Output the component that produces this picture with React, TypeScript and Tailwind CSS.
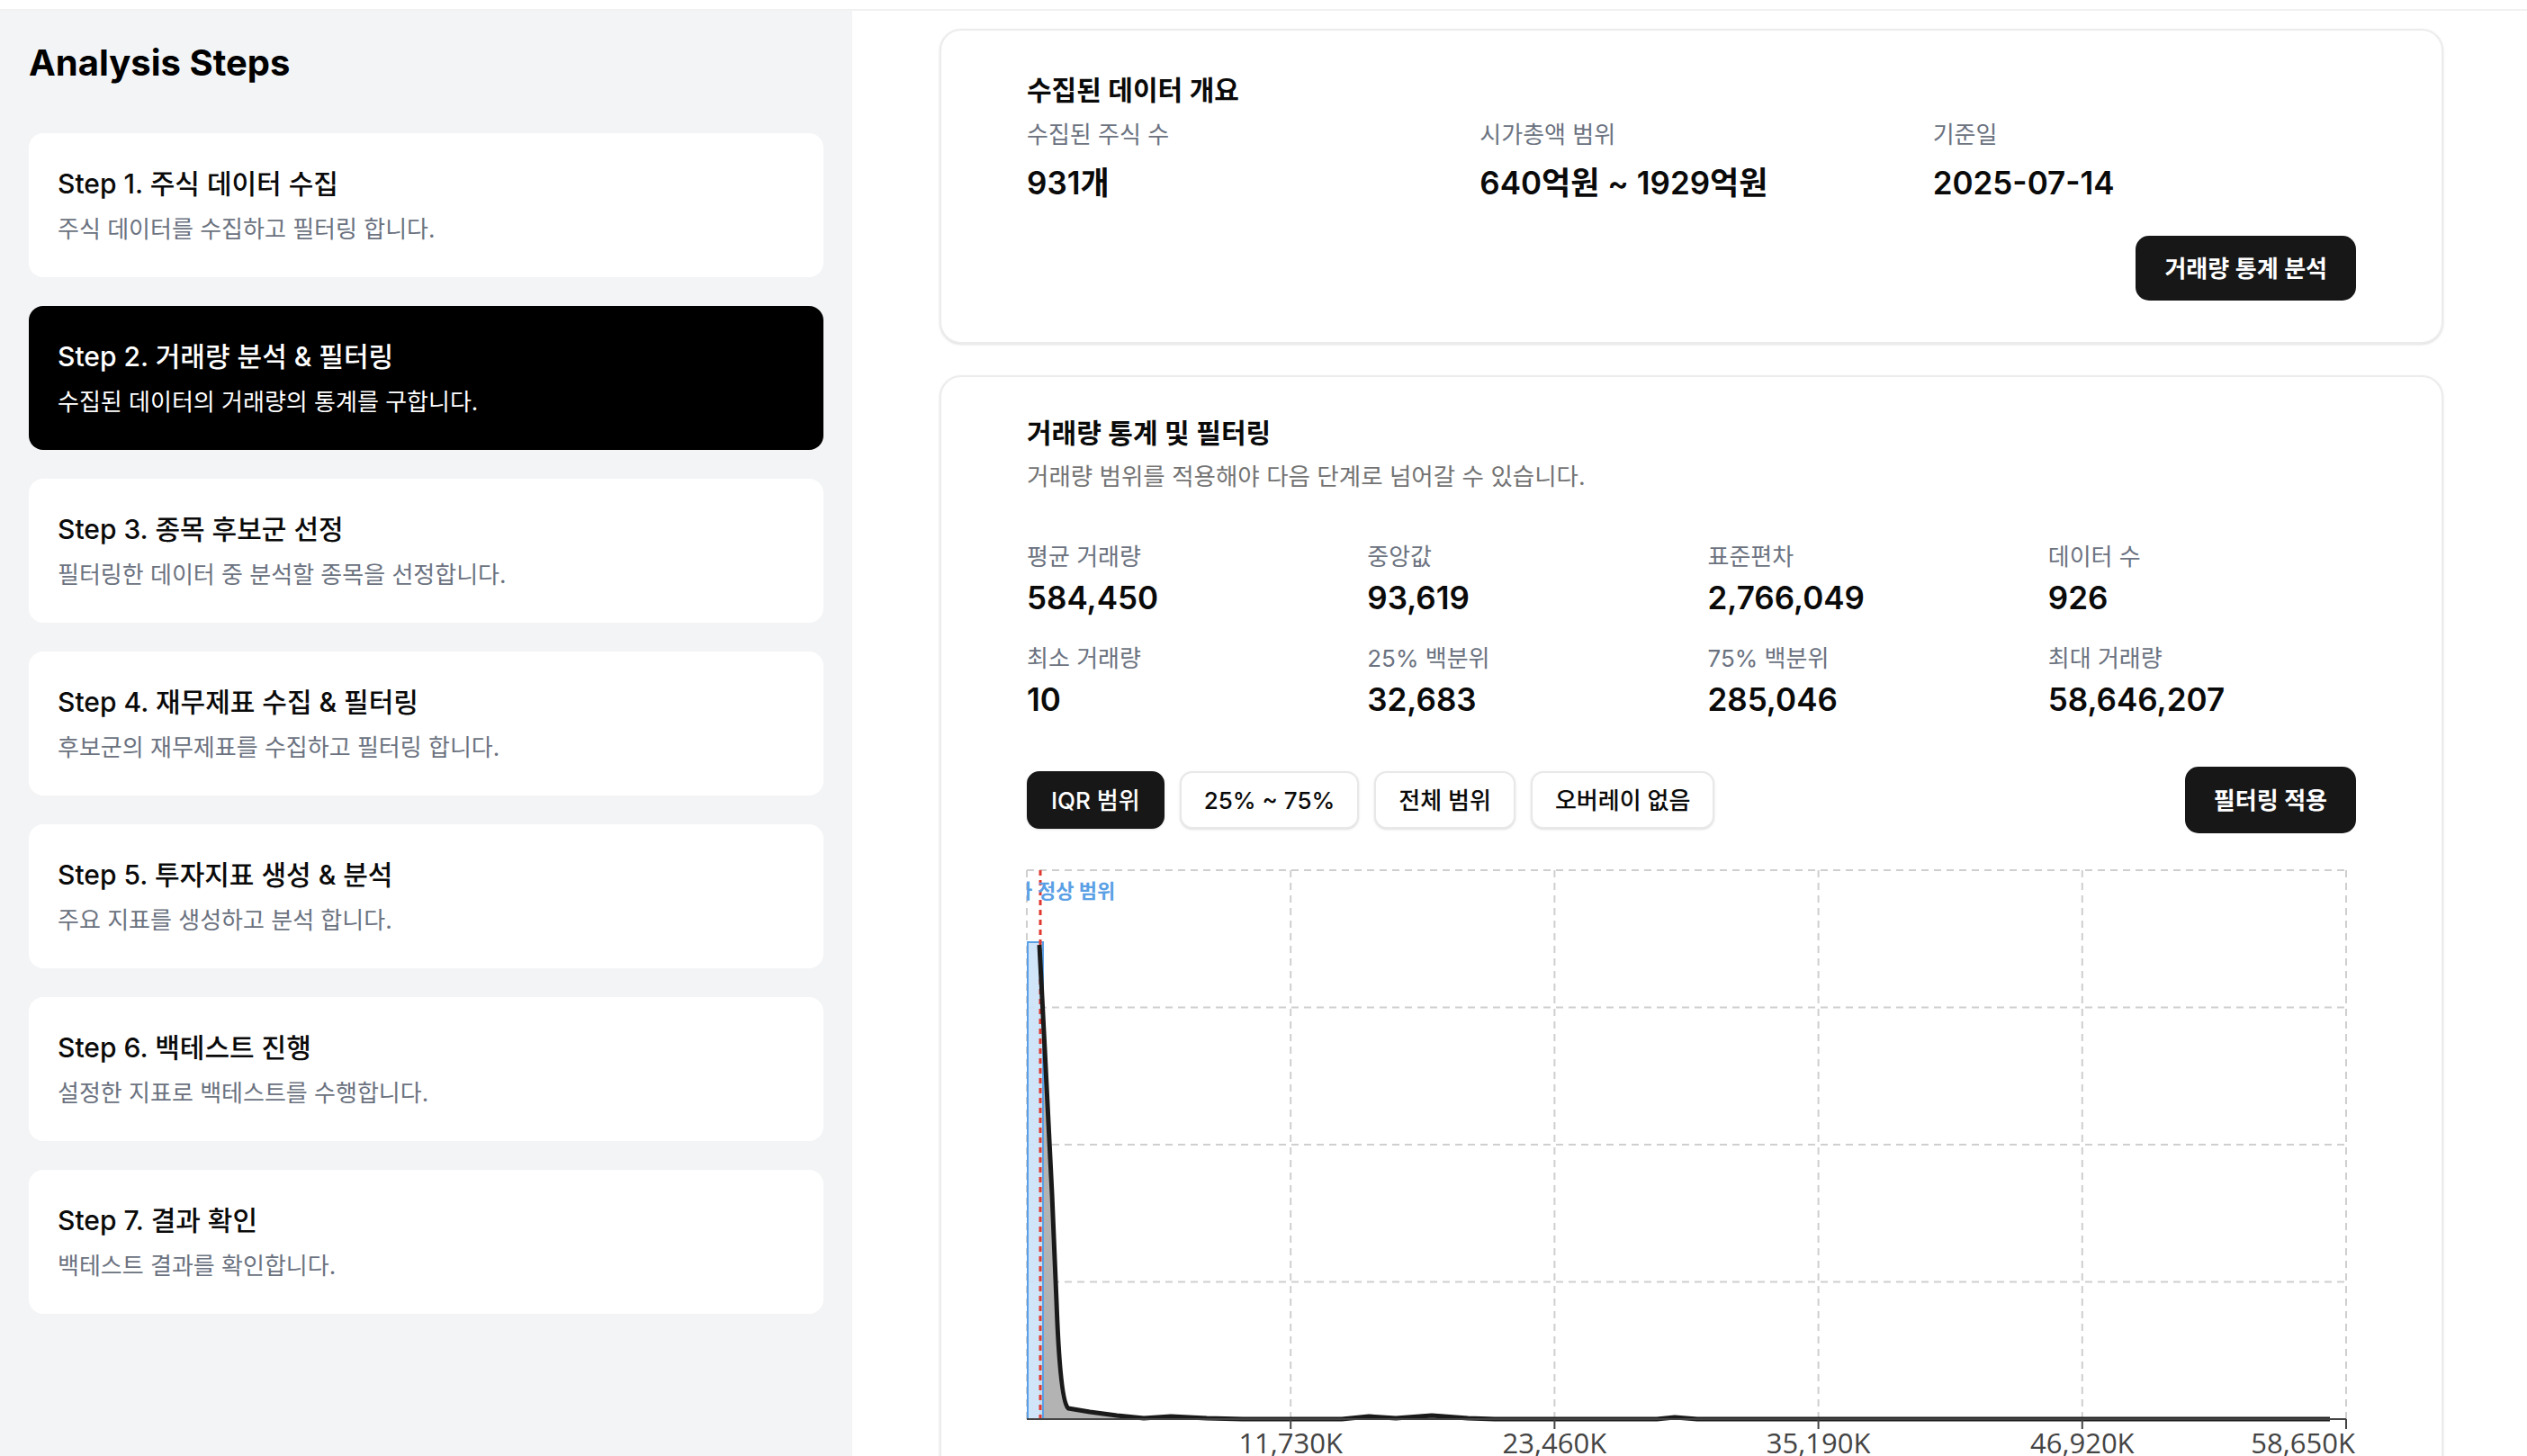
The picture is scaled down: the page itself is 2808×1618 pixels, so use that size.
import type React from 'react';

interface Step {
  title: string;
  desc: string;
}

const steps: Step[] = [
  { title: 'Step 1. 주식 데이터 수집', desc: '주식 데이터를 수집하고 필터링 합니다.' },
  { title: 'Step 2. 거래량 분석 & 필터링', desc: '수집된 데이터의 거래량의 통계를 구합니다.' },
  { title: 'Step 3. 종목 후보군 선정', desc: '필터링한 데이터 중 분석할 종목을 선정합니다.' },
  { title: 'Step 4. 재무제표 수집 & 필터링', desc: '후보군의 재무제표를 수집하고 필터링 합니다.' },
  { title: 'Step 5. 투자지표 생성 & 분석', desc: '주요 지표를 생성하고 분석 합니다.' },
  { title: 'Step 6. 백테스트 진행', desc: '설정한 지표로 백테스트를 수행합니다.' },
  { title: 'Step 7. 결과 확인', desc: '백테스트 결과를 확인합니다.' },
];

const overview = [
  { label: '수집된 주식 수', value: '931개' },
  { label: '시가총액 범위', value: '640억원 ~ 1929억원' },
  { label: '기준일', value: '2025-07-14' },
];

const stats = [
  { label: '평균 거래량', value: '584,450' },
  { label: '중앙값', value: '93,619' },
  { label: '표준편차', value: '2,766,049' },
  { label: '데이터 수', value: '926' },
  { label: '최소 거래량', value: '10' },
  { label: '25% 백분위', value: '32,683' },
  { label: '75% 백분위', value: '285,046' },
  { label: '최대 거래량', value: '58,646,207' },
];

const ranges = ['IQR 범위', '25% ~ 75%', '전체 범위', '오버레이 없음'];

const StepCard: React.FC<{ step: Step; active: boolean }> = ({ step, active }) => (
  <div
    className={`h-[160px] rounded-2xl px-8 flex flex-col justify-center gap-[16px] ${
      active ? 'bg-black text-white' : 'bg-white text-[#0a0a0a]'
    }`}
  >
    <h3 className="text-[30px] leading-[38px] font-medium">{step.title}</h3>
    <p className={`text-[26px] leading-[32px] ${active ? 'text-white' : 'text-[#6b7280]'}`}>{step.desc}</p>
  </div>
);

// plot area 1466 x 610, ticks every 293.2px
const W = 1466;
const H = 610;
const gridX = [0, 1, 2, 3, 4, 5].map((i) => (W / 5) * i);
const gridY = [0, 1, 2, 3].map((i) => (H / 4) * i);
const tickLabels = ['11,730K', '23,460K', '35,190K', '46,920K', '58,650K'];

const curve =
  'M14 83 L20 200 L28 360 L33 480 Q37 590 46 598 L70 602 L100 606 L130 609 L160 607 L200 609 L240 610 L350 610 L380 607 L410 609 L450 606 L490 609 L520 610 L700 610 L720 608 L745 610 L1448 610';

const VolumeChart: React.FC = () => (
  <svg width={1476} height={700} className="mt-[41px] overflow-visible block">
    <defs>
      <clipPath id="plot-clip">
        <rect x={0} y={0} width={1476} height={700} />
      </clipPath>
    </defs>
    {gridY.map((y) => (
      <line key={`h${y}`} x1={0} x2={W} y1={y} y2={y} stroke="#cfcfcf" strokeWidth={2} strokeDasharray="8 6" />
    ))}
    {gridX.map((x) => (
      <line key={`v${x}`} x1={x} x2={x} y1={0} y2={H} stroke="#cfcfcf" strokeWidth={2} strokeDasharray="8 6" />
    ))}
    <path d={`${curve} L14 610 Z`} fill="#b3b3b3" />
    <rect x={1} y={80} width={17} height={530} fill="#cce2f7" fillOpacity={0.9} stroke="#5aa0e6" strokeWidth={2} />
    <line x1={15} x2={15} y1={0} y2={H} stroke="#e0392f" strokeWidth={3} strokeDasharray="6 5" />
    <path d={curve} fill="none" stroke="#1a1a1a" strokeWidth={5} strokeLinejoin="round" />
    <line x1={0} x2={W} y1={H} y2={H} stroke="#444" strokeWidth={2} />
    {gridX.slice(1).map((x, i) => {
      const last = i === tickLabels.length - 1;
      return (
        <g key={`t${x}`}>
          <line x1={x} x2={x} y1={H} y2={H + 11} stroke="#444" strokeWidth={2} />
          <text
            x={last ? W + 10 : x}
            y={H + 38}
            textAnchor={last ? 'end' : 'middle'}
            fontSize={31}
            fill="#444"
            fontFamily="'Open Sans', 'Liberation Sans', sans-serif"
          >
            {tickLabels[i]}
          </text>
        </g>
      );
    })}
    <g clipPath="url(#plot-clip)">
      <text
        x={-14}
        y={31}
        fontSize={22}
        fontWeight={700}
        fill="#5ba0e5"
        fontFamily="Inter, 'Noto Sans CJK KR', sans-serif"
      >
        가
      </text>
    </g>
    <text x={12} y={31} fontSize={22} fontWeight={700} fill="#5ba0e5" fontFamily="Inter, 'Noto Sans CJK KR', sans-serif">
      정상 범위
    </text>
  </svg>
);

export default function App() {
  return (
    <div className="min-h-screen bg-white text-[#0a0a0a] font-[Inter,'Noto_Sans_CJK_KR',sans-serif]">
      <div className="h-[12px] border-b-2 border-[#f1f1f1]" />
      <div className="flex">
        <aside className="w-[947px] shrink-0 bg-[#f3f4f6] px-8 pt-9 pb-10">
          <h1 className="text-[40px] leading-[44px] font-bold text-black">Analysis Steps</h1>
          <div className="mt-[56px] flex flex-col gap-8">
            {steps.map((s, i) => (
              <StepCard key={s.title} step={s} active={i === 1} />
            ))}
          </div>
        </aside>

        <main className="flex-1 pl-[97px] pr-[93px] pt-5 pb-10 flex flex-col gap-[35px]">
          {/* 수집 개요 */}
          <section className="rounded-3xl border-2 border-[#ececec] bg-white shadow-sm px-[95px] pt-12 pb-[46px]">
            <h2 className="text-[30px] leading-[36px] font-semibold">수집된 데이터 개요</h2>
            <div className="mt-4 grid grid-cols-3 gap-x-[33px]">
              {overview.map((o) => (
                <div key={o.label} className="flex flex-col gap-[17px]">
                  <span className="text-[26px] leading-[32px] text-[#6b7280]">{o.label}</span>
                  <span className="text-[35px] leading-[40px] font-semibold">{o.value}</span>
                </div>
              ))}
            </div>
            <div className="mt-[39px] flex justify-end">
              <button className="h-[72px] px-8 rounded-[15px] bg-[#171717] text-white text-[26px] font-semibold">
                거래량 통계 분석
              </button>
            </div>
          </section>

          {/* 거래량 통계 */}
          <section className="rounded-3xl border-2 border-[#ececec] bg-white shadow-sm px-[95px] pt-11 pb-12">
            <h2 className="text-[30px] leading-[36px] font-semibold">거래량 통계 및 필터링</h2>
            <p className="mt-[14px] text-[26.5px] leading-[32px] text-[#737373]">
              거래량 범위를 적용해야 다음 단계로 넘어갈 수 있습니다.
            </p>
            <div className="mt-[58px] grid grid-cols-4 gap-x-[36px] gap-y-8">
              {stats.map((s) => (
                <div key={s.label} className="flex flex-col gap-[9px]">
                  <span className="text-[26px] leading-[32px] text-[#6b7280]">{s.label}</span>
                  <span className="text-[35px] leading-[40px] font-semibold">{s.value}</span>
                </div>
              ))}
            </div>
            <div className="mt-[55px] h-[74px] flex items-center justify-between">
              <div className="flex items-center gap-[17px]">
                {ranges.map((r, i) => (
                  <button
                    key={r}
                    className={`h-[64px] px-[25px] rounded-[14px] border-2 text-[26px] font-medium shadow-sm ${
                      i === 0
                        ? 'bg-[#171717] border-[#171717] text-white'
                        : 'bg-white border-[#e8e8e8] text-[#0a0a0a]'
                    }`}
                  >
                    {r}
                  </button>
                ))}
              </div>
              <button className="h-[74px] px-8 rounded-[15px] bg-[#171717] text-white text-[26px] font-semibold">
                필터링 적용
              </button>
            </div>
            <VolumeChart />
          </section>
        </main>
      </div>
    </div>
  );
}
